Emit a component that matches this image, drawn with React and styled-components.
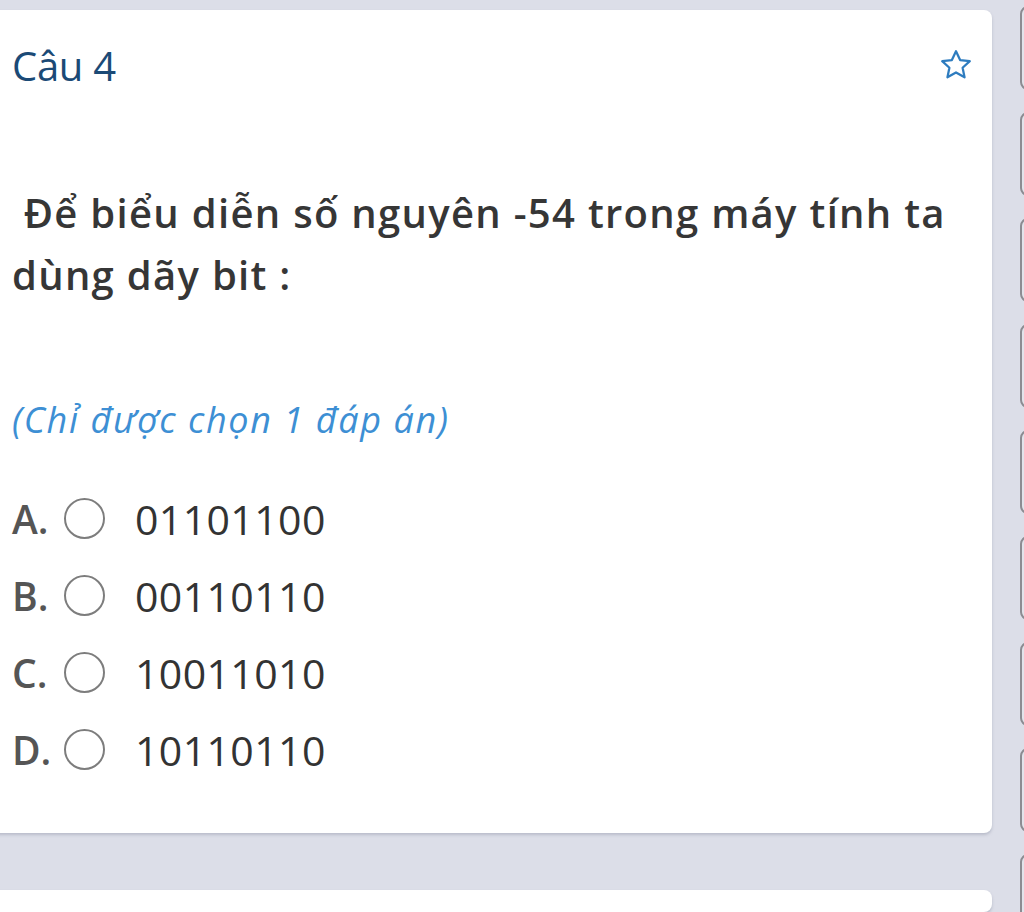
import React from "react";
import styled, { createGlobalStyle } from "styled-components";

const Global = createGlobalStyle`
  html, body { margin: 0; padding: 0; background: #dcdee8; overflow: hidden; }
  body { font-family: "Open Sans", "Noto Sans", sans-serif; }
`;

const Page = styled.div`
  display: flex;
  gap: 28px;
  width: 1024px;
  height: 912px;
  overflow: hidden;
`;

const Main = styled.div`
  display: flex;
  flex-direction: column;
  gap: 57px;
  padding-top: 10px;
  margin-left: -10px;
  width: 1002px;
  flex-shrink: 0;
`;

const Card = styled.section`
  background: #ffffff;
  border-radius: 8px;
  box-shadow: 0 2px 3px rgba(120, 125, 145, 0.35);
  padding: ${p => (p.$empty ? "0" : "30px 18px 45px 22px")};
  height: ${p => (p.$empty ? "200px" : "auto")};
  box-sizing: border-box;
`;

const Header = styled.div`
  display: flex;
  align-items: center;
  justify-content: space-between;
  height: 50px;
`;

const Title = styled.h2`
  margin: 0;
  font-size: 40px;
  font-weight: 500;
  color: #1b4a76;
  letter-spacing: -0.3px;
`;

const Question = styled.p`
  margin: 92px 0 0;
  font-size: 40px;
  line-height: 62px;
  font-weight: 600;
  letter-spacing: 1.3px;
  color: #363636;
  white-space: pre-wrap;
`;

const Note = styled.p`
  margin: 89px 0 0;
  font-size: 36px;
  line-height: 50px;
  font-style: italic;
  letter-spacing: 1.6px;
  color: #3d8fd4;
`;

const Options = styled.div`
  display: flex;
  flex-direction: column;
  margin-top: 35px;
`;

const Option = styled.label`
  display: flex;
  align-items: center;
  height: 77px;
`;

const Letter = styled.span`
  width: 53px;
  font-size: 39px;
  font-weight: 600;
  color: #555555;
`;

const Radio = styled.span`
  width: 37px;
  height: 37px;
  margin-left: -1px;
  border: 2.5px solid #7d7d7d;
  border-radius: 50%;
  flex-shrink: 0;
`;

const Answer = styled.span`
  margin-left: 30px;
  font-size: 41px;
  color: #333333;
  letter-spacing: 0.4px;
`;

const Side = styled.div`
  display: flex;
  flex-direction: column;
  gap: 22px;
  padding-top: 6px;
`;

const SideBox = styled.div`
  width: 60px;
  height: 84px;
  border: 2px solid #8c8c92;
  border-radius: 8px;
  box-sizing: border-box;
  background: #e2e3ea;
  flex-shrink: 0;
`;

const Star = () => (
  <svg width="36" height="36" viewBox="0 0 24 24" fill="none" stroke="#2e7cbf" strokeWidth="1.5" strokeLinejoin="round">
    <path d="M12 2.8l2.75 5.9 6.45.75-4.8 4.4 1.3 6.35L12 16.95 6.3 20.2l1.3-6.35-4.8-4.4 6.45-.75z" />
  </svg>
);

const options = [
  ["A.", "01101100"],
  ["B.", "00110110"],
  ["C.", "10011010"],
  ["D.", "10110110"],
];

export default function App() {
  return (
    <>
      <Global />
      <Page>
        <Main>
          <Card>
            <Header>
              <Title>Câu 4</Title>
              <Star />
            </Header>
            <Question>{" Để biểu diễn số nguyên -54 trong máy tính ta\ndùng dãy bit :"}</Question>
            <Note>(Chỉ được chọn 1 đáp án)</Note>
            <Options>
              {options.map(([l, v]) => (
                <Option key={l}>
                  <Letter>{l}</Letter>
                  <Radio />
                  <Answer>{v}</Answer>
                </Option>
              ))}
            </Options>
          </Card>
          <Card $empty />
        </Main>
        <Side>
          {Array.from({ length: 9 }).map((_, i) => (
            <SideBox key={i} />
          ))}
        </Side>
      </Page>
    </>
  );
}
